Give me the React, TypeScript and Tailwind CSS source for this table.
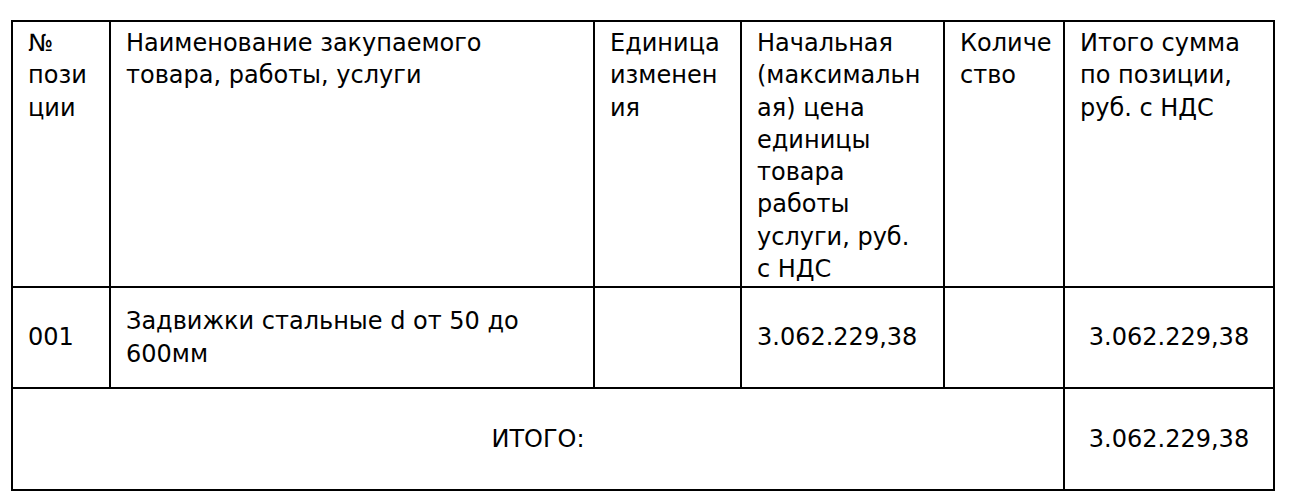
import React from "react";

const cell = "border-2 border-black align-top px-[15px] pt-[5px] pb-0 whitespace-nowrap";
const mid = "border-2 border-black px-[15px] align-middle whitespace-nowrap";

export default function App() {
  return (
    <div className="min-h-[502px] w-[1292px] bg-white pt-[20px] pl-[11px] text-black" style={{ fontFamily: '"DejaVu Sans", "Liberation Sans", sans-serif' }}>
      <table className="w-[1262px] table-fixed border-collapse text-[24px] leading-[32.3px]">
        <colgroup>
          <col className="w-[98px]" />
          <col className="w-[484px]" />
          <col className="w-[147px]" />
          <col className="w-[203px]" />
          <col className="w-[120px]" />
          <col className="w-[210px]" />
        </colgroup>
        <tbody>
          <tr className="h-[266px]">
            <td className={cell}>№<br />пози<br />ции</td>
            <td className={cell}>Наименование закупаемого<br />товара, работы, услуги</td>
            <td className={cell}>Единица<br />изменен<br />ия</td>
            <td className={cell}>Начальная<br />(максимальн<br />ая) цена<br />единицы<br />товара<br />работы<br />услуги, руб.<br />с НДС</td>
            <td className={cell}>Количе<br />ство</td>
            <td className={cell}>Итого сумма<br />по позиции,<br />руб. с НДС</td>
          </tr>
          <tr className="h-[101px]">
            <td className={mid}>001</td>
            <td className={mid}>Задвижки стальные d от 50 до<br />600мм</td>
            <td className={mid}></td>
            <td className={mid}>3.062.229,38</td>
            <td className={mid}></td>
            <td className="border-2 border-black px-[10px] align-middle text-center whitespace-nowrap">3.062.229,38</td>
          </tr>
          <tr className="h-[102px]">
            <td colSpan={5} className="border-2 border-black align-middle text-center">ИТОГО:</td>
            <td className="border-2 border-black px-[10px] align-middle text-center whitespace-nowrap">3.062.229,38</td>
          </tr>
        </tbody>
      </table>
    </div>
  );
}
